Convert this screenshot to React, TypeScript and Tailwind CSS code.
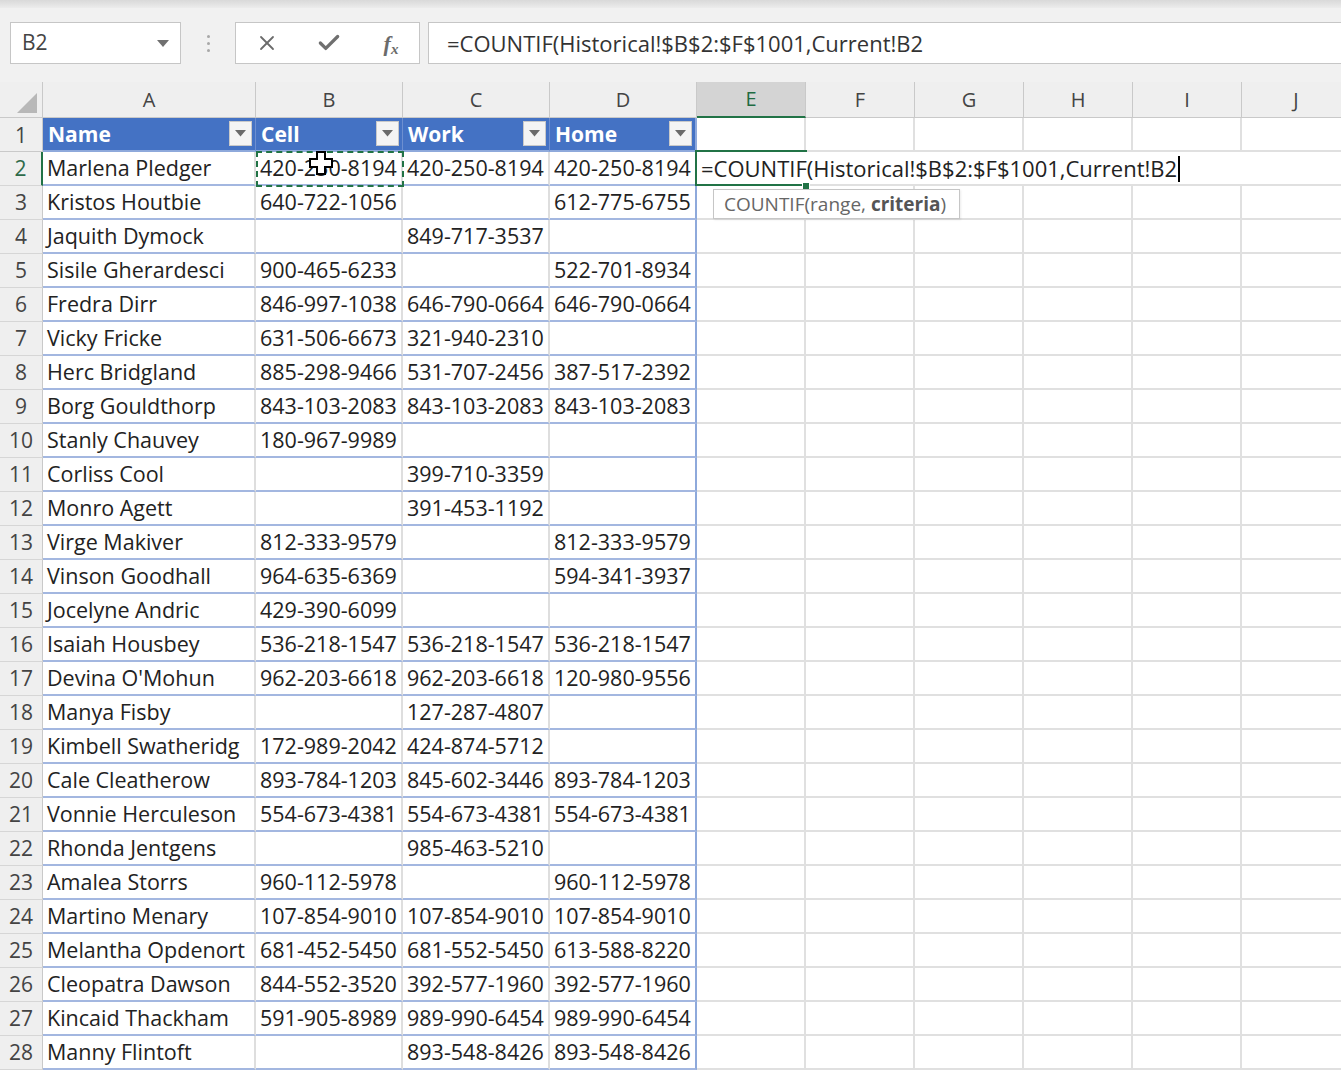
import { X, Check } from 'lucide-react';
import clsx from 'clsx';

type Row = [string, string, string, string];

// long names are shown as far as the column lets them, like the sheet does
const rows: Row[] = [
  ['Marlena Pledger', '420-250-8194', '420-250-8194', '420-250-8194'],
  ['Kristos Houtbie', '640-722-1056', '', '612-775-6755'],
  ['Jaquith Dymock', '', '849-717-3537', ''],
  ['Sisile Gherardesci', '900-465-6233', '', '522-701-8934'],
  ['Fredra Dirr', '846-997-1038', '646-790-0664', '646-790-0664'],
  ['Vicky Fricke', '631-506-6673', '321-940-2310', ''],
  ['Herc Bridgland', '885-298-9466', '531-707-2456', '387-517-2392'],
  ['Borg Gouldthorp', '843-103-2083', '843-103-2083', '843-103-2083'],
  ['Stanly Chauvey', '180-967-9989', '', ''],
  ['Corliss Cool', '', '399-710-3359', ''],
  ['Monro Agett', '', '391-453-1192', ''],
  ['Virge Makiver', '812-333-9579', '', '812-333-9579'],
  ['Vinson Goodhall', '964-635-6369', '', '594-341-3937'],
  ['Jocelyne Andric', '429-390-6099', '', ''],
  ['Isaiah Housbey', '536-218-1547', '536-218-1547', '536-218-1547'],
  ["Devina O'Mohun", '962-203-6618', '962-203-6618', '120-980-9556'],
  ['Manya Fisby', '', '127-287-4807', ''],
  ['Kimbell Swatheridg', '172-989-2042', '424-874-5712', ''],
  ['Cale Cleatherow', '893-784-1203', '845-602-3446', '893-784-1203'],
  ['Vonnie Herculeson', '554-673-4381', '554-673-4381', '554-673-4381'],
  ['Rhonda Jentgens', '', '985-463-5210', ''],
  ['Amalea Storrs', '960-112-5978', '', '960-112-5978'],
  ['Martino Menary', '107-854-9010', '107-854-9010', '107-854-9010'],
  ['Melantha Opdenort', '681-452-5450', '681-552-5450', '613-588-8220'],
  ['Cleopatra Dawson', '844-552-3520', '392-577-1960', '392-577-1960'],
  ['Kincaid Thackham', '591-905-8989', '989-990-6454', '989-990-6454'],
  ['Manny Flintoft', '', '893-548-8426', '893-548-8426'],
];

const cols = ['A', 'B', 'C', 'D', 'E', 'F', 'G', 'H', 'I', 'J'];
const headers = ['Name', 'Cell', 'Work', 'Home'];

function FilterButton() {
  return (
    <div className="absolute right-[3px] top-[3px] flex h-[25px] w-[23px] items-center justify-center border border-[#c9c9c9] bg-[#f4f4f4]">
      <svg width="11" height="7" viewBox="0 0 11 7">
        <polygon points="0,0 11,0 5.5,6.5" fill="#6a6a6a" />
      </svg>
    </div>
  );
}

function Toolbar() {
  return (
    <div className="bg-[#f1f1f1]">
      <div className="h-[8px] bg-gradient-to-b from-[#d9d9d9] to-[#ececec]" />
      <div className="flex items-center pl-[10px] pt-[14px] pb-[18px]">
        <div className="flex h-[42px] w-[171px] items-center justify-between border border-[#c6c6c6] bg-white pl-[11px] pr-[11px]">
          <span className="text-[21px] text-[#444]">B2</span>
          <svg width="12" height="7" viewBox="0 0 12 7">
            <polygon points="0,0 12,0 6,7" fill="#707070" />
          </svg>
        </div>
        <div className="flex w-[54px] flex-col items-center gap-[4px]">
          <span className="h-[3px] w-[3px] rounded-full bg-[#a8a8a8]" />
          <span className="h-[3px] w-[3px] rounded-full bg-[#a8a8a8]" />
          <span className="h-[3px] w-[3px] rounded-full bg-[#a8a8a8]" />
        </div>
        <div className="flex h-[42px] w-[185px] items-center border border-[#c6c6c6] bg-white">
          <div className="flex w-[60px] justify-center pl-[2px]">
            <X size={24} strokeWidth={1.8} color="#6b6b6b" />
          </div>
          <div className="flex w-[60px] justify-center pl-[6px]">
            <Check size={26} strokeWidth={3} color="#6f6f6f" />
          </div>
          <div className="flex w-[60px] justify-center pl-[10px] font-['Liberation_Serif',serif] text-[22px] font-bold italic text-[#6b6b6b]">
            f<span className="self-end pb-[3px] text-[15px] leading-none">x</span>
          </div>
        </div>
        <div className="ml-[8px] flex h-[42px] flex-1 items-center border border-r-0 border-[#c6c6c6] bg-white pl-[18px] text-[22px] text-[#333]">
          =COUNTIF(Historical!$B$2:$F$1001,Current!B2
        </div>
      </div>
    </div>
  );
}

function Sheet() {
  return (
    <div className="relative">
      <div className="grid grid-cols-[43px_213px_147px_147px_147px_109px_109px_109px_109px_109px_109px]">
        {/* column headers */}
        <div className="relative h-[36px] border-r border-b border-[#c9c9c9] bg-[#efefef]">
          <svg className="absolute right-[5px] bottom-[4px]" width="20" height="20" viewBox="0 0 20 20">
            <polygon points="20,0 20,20 0,20" fill="#b8b8b8" />
          </svg>
        </div>
        {cols.map((c) => (
          <div
            key={c}
            className={clsx(
              'flex h-[36px] items-center justify-center border-r text-[20px]',
              c === 'E'
                ? 'border-b-2 border-r-[#c9c9c9] border-b-[#217346] bg-[#d4d4d4] text-[#1f6b42]'
                : 'border-b border-[#c9c9c9] bg-[#efefef] text-[#444]'
            )}
          >
            {c}
          </div>
        ))}

        {/* row 1: table header */}
        <div className="flex h-[34px] items-center justify-center border-r border-b border-[#c9c9c9] bg-[#efefef] pt-[2px] text-[21px] text-[#444]">
          1
        </div>
        {headers.map((h, i) => (
          <div
            key={h}
            className={clsx(
              'relative flex h-[34px] items-center border-b-2 bg-[#4472c4] pl-[5px] pt-[2px] text-[21px] font-bold text-white',
              i === 3 ? 'border-r-2 border-r-[#8ea9db] border-b-[#8ea9db]' : 'border-r border-r-[#6d8fd0] border-b-[#8ea9db]'
            )}
          >
            {h}
            <FilterButton />
          </div>
        ))}
        {cols.slice(4).map((c) => (
          <div key={c} className="h-[34px] border-r-2 border-b-2 border-[#e0e0e0] bg-white" />
        ))}

        {/* data rows */}
        {rows.map((r, ri) => {
          const n = ri + 2;
          return [
            <div
              key={`h${n}`}
              className={clsx(
                'flex h-[34px] items-center justify-center border-b bg-[#efefef] pt-[1px] text-[21px]',
                n === 2 ? 'border-r-2 border-r-[#217346] border-b-[#d6d6d6] text-[#2e6b4a]' : 'border-r border-r-[#c9c9c9] border-b-[#d6d6d6] text-[#444]'
              )}
            >
              {n}
            </div>,
            ...r.map((v, ci) => (
              <div
                key={`c${n}-${ci}`}
                className={clsx(
                  'flex h-[34px] items-center overflow-hidden whitespace-nowrap border-b-2 border-b-[#a3b7e0] bg-white pl-[4px] pt-[1px] text-[21.5px] text-[#222]',
                  ci === 3 ? 'border-r-2 border-r-[#8ea9db]' : 'border-r-2 border-r-[#dedede]'
                )}
              >
                {v}
              </div>
            )),
            ...cols.slice(4).map((c) => (
              <div key={`e${n}${c}`} className="h-[34px] border-r-2 border-b-2 border-[#e0e0e0] bg-white" />
            )),
          ];
        })}
      </div>

      {/* B2 copy marquee */}
      <div className="absolute left-[256px] top-[69px] h-[36px] w-[148px] border-2 border-dashed border-[#217346]" />

      {/* mouse cursor */}
      <svg className="absolute left-[308px] top-[68px]" width="26" height="26" viewBox="0 0 26 26">
        <path d="M9 2h8v7h7v8h-7v7H9v-7H2V9h7z" fill="white" stroke="black" strokeWidth="2" />
      </svg>

      {/* E2 in edit mode, text overflowing to the right */}
      <div className="absolute left-[697px] top-[70px] flex h-[32px] w-[545px] items-center whitespace-nowrap bg-white pl-[4px] pt-[1px] text-[22px] text-[#222]">
        =COUNTIF(Historical!$B$2:$F$1001,Current!B2
        <span className="ml-[1px] inline-block h-[26px] w-[1.5px] bg-black" />
      </div>
      <div className="absolute left-[695px] top-[68px] h-[36px] w-[112px] border-2 border-r-0 border-[#217346]" />
      <div className="absolute left-[802px] top-[100px] h-[8px] w-[8px] border border-white bg-[#217346]" />

      {/* function tooltip */}
      <div className="absolute left-[713px] top-[107px] flex h-[30px] w-[247px] items-center border border-[#c6c6c6] bg-white pl-[10px] text-[19px] text-[#666] shadow-[1px_1px_2px_rgba(0,0,0,0.08)]">
        COUNTIF(range,&nbsp;<span className="font-bold text-[#555]">criteria</span>)
      </div>
    </div>
  );
}

export default function App() {
  return (
    <div className="h-[1071px] w-[1341px] overflow-hidden bg-white font-['Open_Sans',sans-serif]">
      <Toolbar />
      <Sheet />
    </div>
  );
}
